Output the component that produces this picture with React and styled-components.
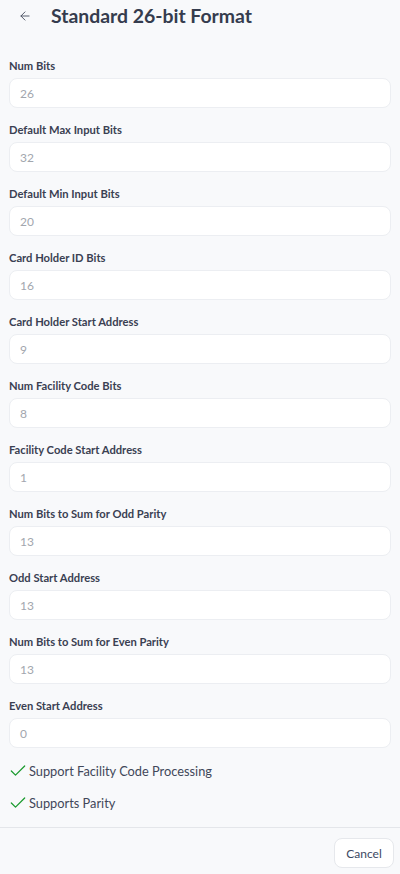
import React from "react";
import styled, { createGlobalStyle } from "styled-components";
import { ArrowLeft, Check } from "lucide-react";

const Global = createGlobalStyle`
  * { box-sizing: border-box; }
  html, body { margin: 0; padding: 0; background: #f8f9fb; }
  body { font-family: Lato, "Noto Sans", sans-serif; color: #353b4c; }
`;

const Page = styled.div`
  width: 400px;
  min-height: 874px;
  background: #f8f9fb;
  display: flex;
  flex-direction: column;
`;

const Header = styled.header`
  display: flex;
  align-items: center;
  height: 28px;
  margin-top: 2px;
  padding-left: 17px;
  gap: 18px;
`;

const BackButton = styled.button`
  width: 16px;
  height: 16px;
  display: flex;
  align-items: center;
  justify-content: center;
  border: none;
  background: transparent;
  padding: 0;
  color: #4b5263;
`;

const Title = styled.h1`
  margin: 0;
  font-size: 19.4px;
  line-height: 28px;
  font-weight: 700;
  color: #353c4e;
`;

const Form = styled.div`
  display: flex;
  flex-direction: column;
  gap: 14px;
  padding: 28px 9px 0 9px;
`;

const Field = styled.div`
  display: flex;
  flex-direction: column;
  gap: 4px;
`;

const Label = styled.label`
  font-size: 11.2px;
  line-height: 16px;
  font-weight: 700;
  color: #3a4052;
`;

const Input = styled.div`
  height: 30px;
  border: 1px solid #eceef2;
  border-radius: 8px;
  background: #fff;
  display: flex;
  align-items: center;
  padding-left: 10px;
  font-size: 12px;
  color: #a2a6ae;
`;

const Checks = styled.div`
  display: flex;
  flex-direction: column;
  gap: 12px;
  padding: 13px 8px 14px;
`;

const CheckRow = styled.div`
  display: flex;
  align-items: center;
  gap: 1px;
  font-size: 12.8px;
  line-height: 20px;
  color: #414759;
`;

const Footer = styled.footer`
  border-top: 1px solid #e4e6ea;
  display: flex;
  justify-content: flex-end;
  padding: 10px 6px 6px;
`;

const CancelButton = styled.button`
  width: 60px;
  height: 30px;
  border: 1px solid #e6e8ec;
  border-radius: 8px;
  background: #fff;
  font-family: Lato, "Noto Sans", sans-serif;
  font-size: 12px;
  color: #3c4862;
  padding: 0;
`;

const fields = [
  ["Num Bits", "26"],
  ["Default Max Input Bits", "32"],
  ["Default Min Input Bits", "20"],
  ["Card Holder ID Bits", "16"],
  ["Card Holder Start Address", "9"],
  ["Num Facility Code Bits", "8"],
  ["Facility Code Start Address", "1"],
  ["Num Bits to Sum for Odd Parity", "13"],
  ["Odd Start Address", "13"],
  ["Num Bits to Sum for Even Parity", "13"],
  ["Even Start Address", "0"],
];

export default function App() {
  return (
    <>
      <Global />
      <Page>
        <Header>
          <BackButton aria-label="Back">
            <ArrowLeft size={14} strokeWidth={1.6} />
          </BackButton>
          <Title>Standard 26-bit Format</Title>
        </Header>
        <Form>
          {fields.map(([label, value]) => (
            <Field key={label}>
              <Label>{label}</Label>
              <Input>{value}</Input>
            </Field>
          ))}
        </Form>
        <Checks>
          <CheckRow>
            <Check size={20} strokeWidth={1.5} color="#1a9a2e" />
            Support Facility Code Processing
          </CheckRow>
          <CheckRow>
            <Check size={20} strokeWidth={1.5} color="#1a9a2e" />
            Supports Parity
          </CheckRow>
        </Checks>
        <Footer>
          <CancelButton>Cancel</CancelButton>
        </Footer>
      </Page>
    </>
  );
}
